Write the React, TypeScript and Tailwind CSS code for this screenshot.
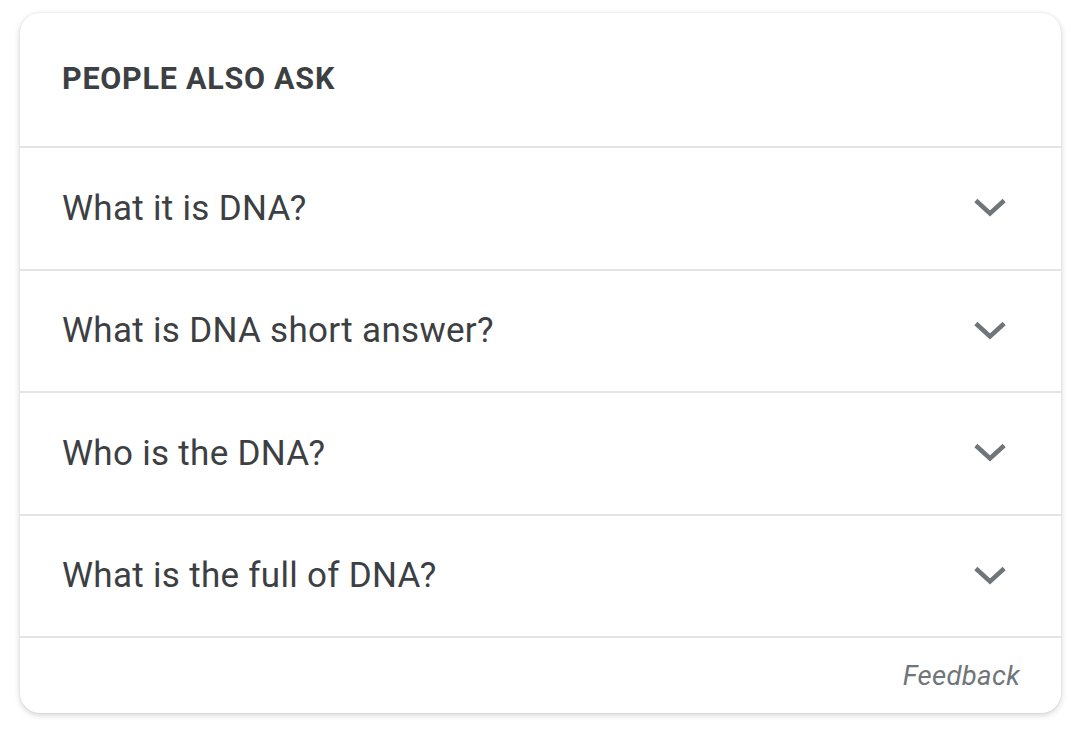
const questions = [
  "What it is DNA?",
  "What is DNA short answer?",
  "Who is the DNA?",
  "What is the full of DNA?",
];

function Chevron() {
  return (
    <svg width="32" height="20" viewBox="0 0 32 20" fill="none">
      <path
        d="M3.5 4 L16 15.5 L28.5 4"
        stroke="#70757a"
        strokeWidth="4.5"
        strokeLinecap="square"
      />
    </svg>
  );
}

export default function App() {
  return (
    <div className="min-h-[732px] bg-white pt-[13px] pl-[20px] font-['Roboto',sans-serif]">
      <div className="w-[1041px] h-[700px] rounded-[20px] bg-white shadow-[0_2px_6px_rgba(0,0,0,0.18),0_0_2px_rgba(0,0,0,0.08)] flex flex-col">
        <div className="h-[135px] shrink-0 flex items-center pl-[42px] border-b-2 border-[#e3e4e6]">
          <h2 className="text-[30.5px] font-bold tracking-[0.75px] text-[#3c4043] leading-none">
            PEOPLE ALSO ASK
          </h2>
        </div>
        {questions.map((q) => (
          <div
            key={q}
            className="h-[122.5px] shrink-0 flex items-center justify-between pl-[42px] pr-[55px] border-b-2 border-[#e3e4e6]"
          >
            <span className="text-[35px] tracking-[0.3px] text-[#3c4043] leading-none">{q}</span>
            <Chevron />
          </div>
        ))}
        <div className="flex-1 flex items-center justify-end pr-[41px]">
          <span className="text-[27.5px] tracking-[0.3px] italic text-[#70757a] leading-none">Feedback</span>
        </div>
      </div>
    </div>
  );
}
